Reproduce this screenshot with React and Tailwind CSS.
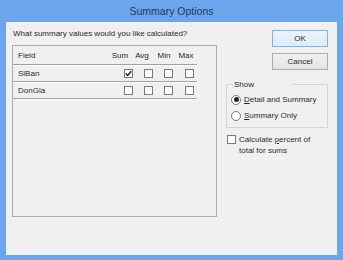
import React from "react";

const font = { fontFamily: '"Liberation Sans", Arial, sans-serif' };

function Box({ checked }) {
  return (
    <div className="w-[9px] h-[9px] border border-[#7a7a7a] bg-white flex items-center justify-center">
      {checked && (
        <svg width="7" height="7" viewBox="0 0 7 7">
          <path d="M0.8 3.4 L2.7 5.4 L6.2 1.2" stroke="#222" strokeWidth="1.5" fill="none" />
        </svg>
      )}
    </div>
  );
}

function Radio({ on }) {
  return (
    <div className="w-[10px] h-[10px] rounded-full border border-[#7a7a7a] bg-white flex items-center justify-center">
      {on && <div className="w-[5px] h-[5px] rounded-full bg-[#222]" />}
    </div>
  );
}

function Row({ name, checks }) {
  return (
    <div className="flex items-center h-[16px] border-b border-[#a0a0a0] shadow-[0_1px_0_#ffffff]">
      <span className="w-[111px] pl-[5px]">{name}</span>
      <Box checked={checks[0]} />
      <div className="ml-[11px]"><Box checked={checks[1]} /></div>
      <div className="ml-[11px]"><Box checked={checks[2]} /></div>
      <div className="ml-[12px]"><Box checked={checks[3]} /></div>
    </div>
  );
}

export default function App() {
  return (
    <div className="w-[343px] h-[260px] bg-[#6ba6ec] flex flex-col text-[8px] leading-[11px] text-[#2a2a2a]" style={font}>
      <div className="h-[22px] flex items-center justify-center text-[10.5px] text-[#233a5a]">
        Summary Options
      </div>
      <div className="mx-[6px] mb-[5px] flex-1 bg-[#f0f0f0] flex pt-[6px] pl-[6px]">
        <div className="w-[205px] flex flex-col">
          <div className="h-[11px] pl-[1px]">What summary values would you like calculated?</div>
          <div className="mt-[6px] h-[172px] border border-[#adadad] pr-[19px]">
            <div className="flex items-end h-[19px] pb-[3px] border-b border-[#a0a0a0] shadow-[0_1px_0_#ffffff]">
              <span className="w-[96px] pl-[5px]">Field</span>
              <span className="w-[22px] text-center">Sum</span>
              <span className="w-[22px] text-center">Avg</span>
              <span className="w-[22px] text-center">Min</span>
              <span className="w-[22px] text-center">Max</span>
            </div>
            <div className="h-[1px]" />
            <Row name="SlBan" checks={[true, false, false, false]} />
            <div className="h-[1px]" />
            <Row name="DonGia" checks={[false, false, false, false]} />
          </div>
        </div>
        <div className="ml-[9px] w-[102px] flex flex-col">
          <div className="ml-[46px] mt-[2px] w-[56px] h-[17px] border border-[#7eb4ea] bg-gradient-to-b from-[#ecf4fc] to-[#dcecfc] flex items-center justify-center">
            OK
          </div>
          <div className="ml-[46px] mt-[6px] w-[56px] h-[17px] border border-[#adadad] bg-gradient-to-b from-[#f0f0f0] to-[#e5e5e5] flex items-center justify-center">
            Cancel
          </div>
          <div className="mt-[14px] h-[44px] border border-[#d5d5d5] relative flex flex-col">
            <div className="absolute left-[6px] top-[-6px] w-[60px] bg-[#f0f0f0] pl-[1px]">Show</div>
            <div className="flex items-center mt-[9px] ml-[4px] h-[11px]">
              <Radio on />
              <span className="ml-[3px]"><span className="underline">D</span>etail and Summary</span>
            </div>
            <div className="flex items-center mt-[5px] ml-[4px] h-[11px]">
              <Radio />
              <span className="ml-[3px]"><span className="underline">S</span>ummary Only</span>
            </div>
          </div>
          <div className="flex mt-[6px] ml-[1px]">
            <div className="mt-[1px]"><Box /></div>
            <div className="ml-[3px]">
              Calculate <span className="underline">p</span>ercent of<br />total for sums
            </div>
          </div>
        </div>
      </div>
    </div>
  );
}
